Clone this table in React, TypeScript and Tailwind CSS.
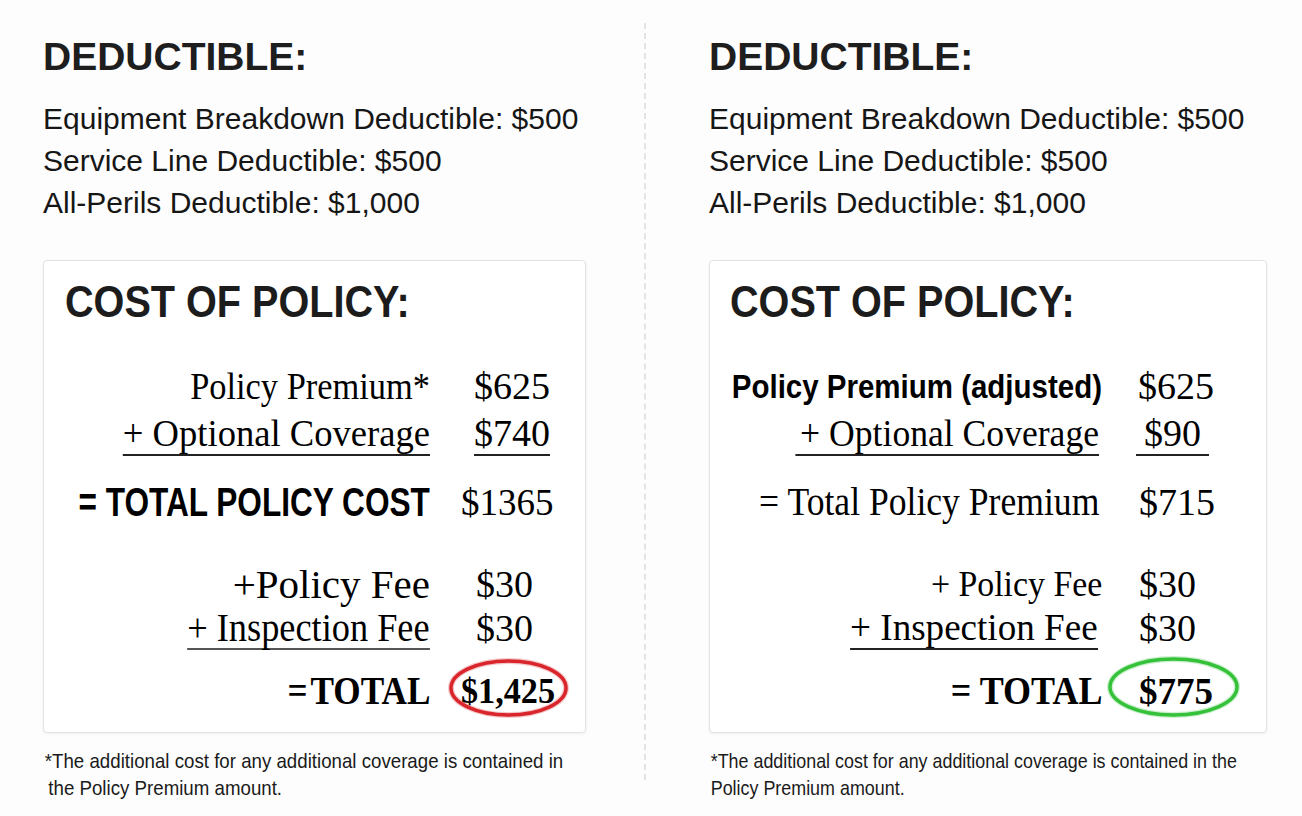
import React from "react";

const SANS = "font-['Liberation_Sans',Arial,sans-serif]";
const SERIF = "font-['Liberation_Serif','Times_New_Roman',serif]";

function Deductibles() {
  return (
    <div className={SANS}>
      <div className="text-[39px] leading-[39px] font-bold text-[#1e1e1e] whitespace-nowrap">DEDUCTIBLE:</div>
      <div className="mt-[22px] text-[30px] leading-[42px] text-[#161616] whitespace-nowrap">
        <div>Equipment Breakdown Deductible: $500</div>
        <div>Service Line Deductible: $500</div>
        <div>All-Perils Deductible: $1,000</div>
      </div>
    </div>
  );
}

function Ellipse({ color, w, h }: { color: string; w: number; h: number }) {
  return (
    <svg width={w} height={h} viewBox={`0 0 ${w} ${h}`} className="pointer-events-none">
      <ellipse cx={w / 2} cy={h / 2} rx={w / 2 - 4} ry={h / 2 - 4} fill="none" stroke={color} strokeOpacity={0.25} strokeWidth={6} />
      <ellipse cx={w / 2} cy={h / 2} rx={w / 2 - 4} ry={h / 2 - 4} fill="none" stroke={color} strokeWidth={3.5} />
    </svg>
  );
}

export default function App() {
  return (
    <div className="flex h-[816px] w-[1302px] items-start overflow-hidden bg-[#fdfdfd] pl-[43px] text-[#111]">
      {/* LEFT COLUMN */}
      <div className="w-[543px] shrink-0 pt-[37px]">
        <Deductibles />
        <div className="relative mt-[36px] h-[473px] w-[543px] rounded-[4px] border border-[#e3e3e3] bg-white shadow-[0_1px_3px_rgba(0,0,0,0.06)]">
          <div className="pl-[21px] pt-[19px]">
            <div className={`${SANS} origin-left scale-x-[0.9] whitespace-nowrap text-[44px] font-bold leading-[44px] text-[#1c1c1c]`}>COST OF POLICY:</div>
          </div>
          <div className={`${SERIF} text-black`}>
            {/* row 1 */}
            <div className="mt-[40px] flex h-[44px] items-center">
              <div className="flex w-[386px] justify-end">
                <span className="inline-block origin-right scale-x-[0.905] whitespace-nowrap text-[38px] leading-none">Policy Premium*</span>
              </div>
              <div className="pl-[44px] text-[38px] leading-none">$625</div>
            </div>
            {/* row 2 */}
            <div className="mt-[4px] flex h-[44px] items-center">
              <div className="flex h-full w-[386px] justify-end">
                <span className="flex h-full origin-right scale-x-[0.963] items-center whitespace-nowrap border-b-[2px] border-[#222] text-[38px] leading-none">+ Optional Coverage</span>
              </div>
              <div className="flex h-full pl-[44px]">
                <span className="flex h-full items-center border-b-[2px] border-[#222] text-[38px] leading-none">$740</span>
              </div>
            </div>
            {/* row 3 */}
            <div className="mt-[24px] flex h-[44px] items-center">
              <div className="flex w-[386px] justify-end">
                <span className={`${SANS} inline-block origin-right scale-x-[0.79] whitespace-nowrap text-[40px] font-bold leading-none`}>= TOTAL POLICY COST</span>
              </div>
              <div className="pl-[31px] text-[37px] leading-none">$1365</div>
            </div>
            {/* row 4 */}
            <div className="mt-[38px] flex h-[44px] items-center">
              <div className="flex w-[386px] justify-end">
                <span className="inline-block origin-right whitespace-nowrap text-[41px] leading-none">+Policy Fee</span>
              </div>
              <div className="pl-[46px] text-[38px] leading-none">$30</div>
            </div>
            {/* row 5 */}
            <div className="flex h-[44px] items-center">
              <div className="flex h-full w-[386px] justify-end">
                <span className="flex h-full origin-right scale-x-[0.886] items-center whitespace-nowrap border-b-[2px] border-[#555] text-[41px] leading-none">+ Inspection Fee</span>
              </div>
              <div className="pl-[46px] text-[38px] leading-none">$30</div>
            </div>
            {/* row 6 */}
            <div className="mt-[19px] flex h-[44px] items-center">
              <div className="flex w-[386px] justify-end">
                <span className="inline-block origin-right scale-x-[0.88] whitespace-nowrap text-[40px] font-bold leading-none">=&#8202;TOTAL</span>
              </div>
              <div className="pl-[31px]">
                <span className="relative flex h-[44px] items-center">
                  <span className="inline-block origin-left scale-x-[0.95] text-[36px] font-bold leading-none">$1,425</span>
                  <span className="absolute left-[-14px] top-[-12px]">
                    <Ellipse color="#d9262c" w={123} h={62} />
                  </span>
                </span>
              </div>
            </div>
          </div>
        </div>
        <div className={`${SANS} mt-[14px] text-[21px] leading-[27px] text-[#1a1a1a]`}>
          <div className="origin-left scale-x-[0.89] whitespace-nowrap pl-[2px]">*The additional cost for any additional coverage is contained in</div>
          <div className="origin-left scale-x-[0.89] whitespace-nowrap pl-[6px]">the Policy Premium amount.</div>
        </div>
      </div>

      {/* DIVIDER */}
      <div className="ml-[58px] mt-[23px] h-[757px] w-0 shrink-0 border-l-2 border-dashed border-[#e4e4e4]" />

      {/* RIGHT COLUMN */}
      <div className="ml-[63px] w-[558px] shrink-0 pt-[37px]">
        <Deductibles />
        <div className="relative mt-[36px] h-[473px] w-[558px] rounded-[4px] border border-[#e3e3e3] bg-white shadow-[0_1px_3px_rgba(0,0,0,0.06)]">
          <div className="pl-[20px] pt-[19px]">
            <div className={`${SANS} origin-left scale-x-[0.9] whitespace-nowrap text-[44px] font-bold leading-[44px] text-[#1c1c1c]`}>COST OF POLICY:</div>
          </div>
          <div className={`${SERIF} text-black`}>
            {/* row 1 */}
            <div className="mt-[40px] flex h-[44px] items-center">
              <div className="flex w-[392px] justify-end">
                <span className={`${SANS} inline-block origin-right scale-x-[0.867] whitespace-nowrap text-[34px] font-bold leading-none`}>Policy Premium (adjusted)</span>
              </div>
              <div className="pl-[36px] text-[38px] leading-none">$625</div>
            </div>
            {/* row 2 */}
            <div className="mt-[4px] flex h-[44px] items-center">
              <div className="flex h-full w-[389px] justify-end">
                <span className="flex h-full origin-right scale-x-[0.937] items-center whitespace-nowrap border-b-[2px] border-[#222] pl-[5px] text-[38px] leading-none">+ Optional Coverage</span>
              </div>
              <div className="flex h-full pl-[37px]">
                <span className="flex h-full items-center border-b-[2px] border-[#222] px-[8px] text-[38px] leading-none">$90</span>
              </div>
            </div>
            {/* row 3 */}
            <div className="mt-[24px] flex h-[44px] items-center">
              <div className="flex w-[389px] justify-end">
                <span className="inline-block origin-right scale-x-[0.89] whitespace-nowrap text-[40px] leading-none">= Total Policy Premium</span>
              </div>
              <div className="pl-[40px] text-[38px] leading-none">$715</div>
            </div>
            {/* row 4 */}
            <div className="mt-[38px] flex h-[44px] items-center">
              <div className="flex w-[392px] justify-end">
                <span className="inline-block origin-right scale-x-[0.94] whitespace-nowrap text-[36px] leading-none">+ Policy Fee</span>
              </div>
              <div className="pl-[37px] text-[38px] leading-none">$30</div>
            </div>
            {/* row 5 */}
            <div className="flex h-[44px] items-center">
              <div className="flex h-full w-[388px] justify-end">
                <span className="flex h-full origin-right scale-x-[0.976] items-center whitespace-nowrap border-b-[2px] border-[#222] text-[38px] leading-none">+ Inspection Fee</span>
              </div>
              <div className="pl-[41px] text-[38px] leading-none">$30</div>
            </div>
            {/* row 6 */}
            <div className="mt-[19px] flex h-[44px] items-center">
              <div className="flex w-[392px] justify-end">
                <span className="inline-block origin-right scale-x-[0.9] whitespace-nowrap text-[40px] font-bold leading-none">= TOTAL</span>
              </div>
              <div className="pl-[37px]">
                <span className="relative flex h-[44px] items-center">
                  <span className="inline-block text-[37px] font-bold leading-none">$775</span>
                  <span className="absolute left-[-33px] top-[-14px]">
                    <Ellipse color="#35c23a" w={135} h={64} />
                  </span>
                </span>
              </div>
            </div>
          </div>
        </div>
        <div className={`${SANS} mt-[14px] text-[21px] leading-[27px] text-[#1a1a1a]`}>
          <div className="origin-left scale-x-[0.852] whitespace-nowrap pl-[2px]">*The additional cost for any additional coverage is contained in the</div>
          <div className="origin-left scale-x-[0.852] whitespace-nowrap pl-[2px]">Policy Premium amount.</div>
        </div>
      </div>
    </div>
  );
}
